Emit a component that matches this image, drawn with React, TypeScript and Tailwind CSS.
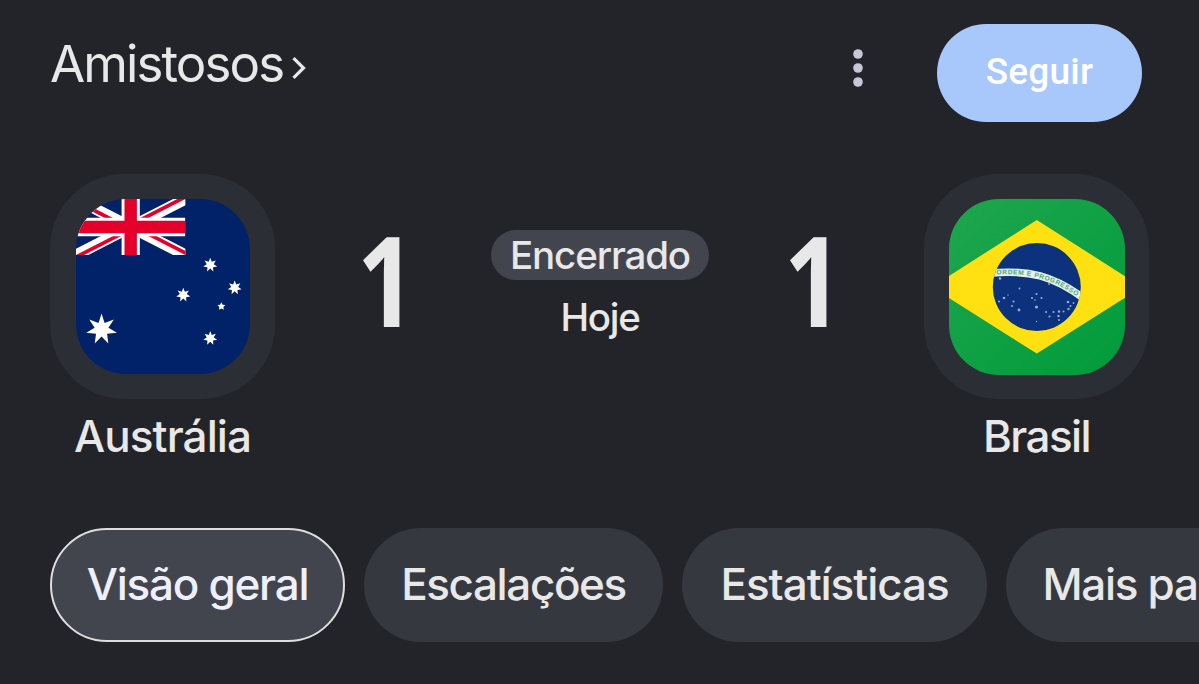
import type { ReactNode } from 'react';
import { clsx } from 'clsx';

const TABS = [
  { label: 'Visão geral', size: 'w-[295px] tracking-[-1.25px]' },
  { label: 'Escalações', size: 'w-[299px] tracking-[-1.4px]' },
  { label: 'Estatísticas', size: 'w-[305px] tracking-[-1.05px]' },
  { label: 'Mais partidas', size: 'w-[340px] tracking-[-1.3px]' },
];

function starPoints(cx: number, cy: number, r: number, tips = 7, inner = 0.45) {
  const points: string[] = [];
  for (let i = 0; i < tips * 2; i++) {
    const radius = i % 2 === 0 ? r : r * inner;
    const angle = (Math.PI * i) / tips - Math.PI / 2;
    points.push(`${(cx + radius * Math.cos(angle)).toFixed(2)},${(cy + radius * Math.sin(angle)).toFixed(2)}`);
  }
  return points.join(' ');
}

function AustraliaFlag() {
  return (
    <svg viewBox="0 0 175 175" preserveAspectRatio="none" className="h-[175px] w-[174px]">
      <rect width="175" height="175" fill="#012169" />
      <svg width="110" height="56" viewBox="0 0 60 30" preserveAspectRatio="none">
        <clipPath id="saltire">
          <path d="M30 15h30v15zM30 15v15H0zM30 15H0V0zM30 15V0h30z" />
        </clipPath>
        <path d="M0 0l60 30M60 0L0 30" stroke="#fff" strokeWidth="6" />
        <path d="M0 0l60 30M60 0L0 30" stroke="#e4002b" strokeWidth="4" clipPath="url(#saltire)" />
        <path d="M30 0v30M0 15h60" stroke="#fff" strokeWidth="10" />
        <path d="M30 0v30M0 15h60" stroke="#e4002b" strokeWidth="6.8" />
      </svg>
      <g fill="#fff">
        <polygon points={starPoints(25.7, 130.3, 15.8)} />
        <polygon points={starPoints(135, 66, 7.2, 7, 0.5)} />
        <polygon points={starPoints(159.6, 88.7, 7.2, 7, 0.5)} />
        <polygon points={starPoints(107.9, 95.9, 7.2, 7, 0.5)} />
        <polygon points={starPoints(135, 139.2, 7.2, 7, 0.5)} />
        <polygon points={starPoints(146.2, 107.4, 4.2, 5, 0.5)} />
      </g>
    </svg>
  );
}

const SKY = [
  [51, 79.5, 1.3], [70.5, 89.5, 0.9], [50, 102.5, 1], [55, 99, 1.3], [64.5, 102.5, 1.1],
  [63, 107, 1], [70, 111, 1.4], [83, 99, 1.1], [87.5, 95, 1.1], [92.5, 99, 1.1],
  [87.5, 108, 1.6], [86, 101, 0.8], [97, 113, 1], [100.5, 117.5, 1.1], [104.5, 113, 1.1], [110, 112.5, 1.2],
  [109.5, 117, 1.2], [110, 121, 1], [114.5, 112.5, 1], [119, 103, 1.3], [119.5, 110, 1.2],
  [121.5, 107, 1], [124.5, 104, 0.9], [100, 85, 0.9], [87.5, 122.5, 0.7], [59, 96, 0.7],
];

function BrazilFlag() {
  return (
    <svg viewBox="0 0 176 176" className="h-[176px] w-[176px]">
      <defs>
        <linearGradient id="field" x1="0" y1="0" x2="1" y2="1">
          <stop offset="0" stopColor="#1fa64f" />
          <stop offset="1" stopColor="#009b3a" />
        </linearGradient>
        <clipPath id="globe">
          <circle cx="87.8" cy="88" r="44" />
        </clipPath>
        <path id="motto" d="M47.5 75.6C80 73.6 104 79.6 131.5 99.8" />
      </defs>
      <rect width="176" height="176" fill="url(#field)" />
      <path d="M87.8 21L193 88 87.8 154.6-17.4 88z" fill="#ffe011" />
      <circle cx="87.8" cy="88" r="44" fill="#0c327d" />
      <g clipPath="url(#globe)">
        <path d="M42 74C80 70.6 104 76.7 135 99.5" fill="none" stroke="#e4f1ec" strokeWidth="7.6" />
        <text fill="#4fa67c" className="font-['Liberation_Sans'] text-[6.6px] font-bold">
          <textPath href="#motto" textLength="85">ORDEM E PROGRESSO</textPath>
        </text>
        {SKY.map(([x, y, r]) => (
          <circle key={`${x}-${y}`} cx={x} cy={y} r={r} fill="#c3d3ee" opacity="0.75" />
        ))}
      </g>
    </svg>
  );
}

function Team({ name, className, children }: { name: string; className?: string; children: ReactNode }) {
  return (
    <div className="flex w-[225px] shrink-0 flex-col items-center">
      <div className="flex h-[225px] w-[225px] items-center justify-center rounded-[74px] bg-[#2c2e35]">
        <div className="overflow-hidden rounded-[50px]">{children}</div>
      </div>
      <div className={clsx('mt-2 text-[44px] leading-[58px] font-medium whitespace-nowrap', className)}>{name}</div>
    </div>
  );
}

function Score({ value, className }: { value: number; className?: string }) {
  return (
    <div className={clsx("font-['Open_Sans',sans-serif] text-[125px] leading-[210px] font-bold", className)}>
      <span className="inline-block origin-left scale-x-[0.82]">{value}</span>
    </div>
  );
}

export default function App() {
  return (
    <div className="h-[684px] w-full overflow-hidden bg-[#232429] font-['Inter',sans-serif] text-[#e8e8e8]">
      <header className="flex items-center pt-6 pr-[57px] pl-[50px]">
        <a className="flex items-center gap-[9px]">
          <span className="-mt-[18px] text-[51px] leading-[60px] tracking-[-1.9px]">Amistosos</span>
          <svg viewBox="0 0 14 22" className="-mt-[11px] h-[22px] w-[14px]" fill="none" stroke="currentColor" strokeWidth="3.2">
            <path d="M1.5 1.2L11.5 11 1.5 20.8" />
          </svg>
        </a>
        <button className="mr-[74px] ml-auto -mt-2.5">
          <svg viewBox="0 0 10 38" className="h-[38px] w-[10px]" fill="#c6c8d7">
            <circle cx="5" cy="5" r="4.8" />
            <circle cx="5" cy="19" r="4.8" />
            <circle cx="5" cy="33" r="4.8" />
          </svg>
        </button>
        <button className="h-[98px] w-[205px] rounded-full bg-[#a8c7fa] pb-0.5 font-['Roboto',sans-serif] text-[37px] font-medium tracking-[0.2px] text-white">
          Seguir
        </button>
      </header>

      <section className="mt-[52px] flex pl-[50px]">
        <Team name="Austrália" className="tracking-[-0.9px]">
          <AustraliaFlag />
        </Team>
        <Score value={1} className="w-[216px] pl-[82px]" />
        <div className="flex w-[218px] flex-col items-center pt-14">
          <span className="h-[50px] w-[218px] rounded-full bg-[#42444e] text-center text-[38.5px] leading-[50px] font-medium tracking-[-1.15px]">
            Encerrado
          </span>
          <span className="mt-3 text-[38.5px] leading-[50px] font-medium tracking-[-1.3px]">Hoje</span>
        </div>
        <Score value={1} className="w-[215px] pl-[75px]" />
        <Team name="Brasil" className="tracking-[-1.6px]">
          <BrazilFlag />
        </Team>
      </section>

      <nav className="mt-[63px] flex gap-[19px] pl-[50px]">
        {TABS.map(({ label, size }, i) => (
          <button
            key={label}
            className={clsx(
              'h-[114px] shrink-0 rounded-full pb-[3px] text-[44px] font-medium whitespace-nowrap',
              size,
              i === 0 ? 'border-2 border-[#dedede] bg-[#42444e] text-[#eeefff]' : 'bg-[#36383f]'
            )}
          >
            {label}
          </button>
        ))}
      </nav>
    </div>
  );
}
